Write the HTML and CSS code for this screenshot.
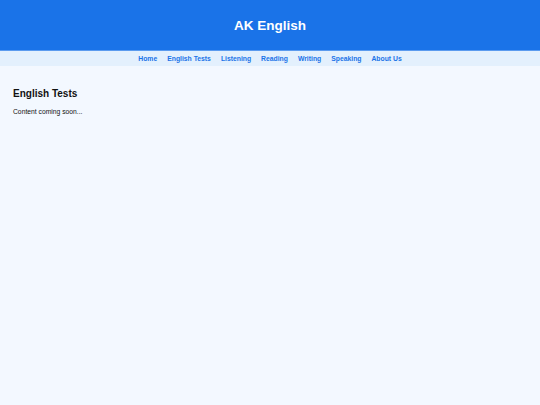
FILE: index.html
```html
<!DOCTYPE html>
<html lang="en">
<head>
    <meta charset="UTF-8">
    <meta name="viewport" content="width=device-width, initial-scale=1.0">
    <title>AK English - English Tests</title>
    <link rel="stylesheet" href="styles.css">
</head>
<body>
    <header class="header">
        <h1 class="logo">AK English</h1>
    </header>
    <nav class="nav">
        <a href="#">Home</a>
        <a href="#">English Tests</a>
        <a href="#">Listening</a>
        <a href="#">Reading</a>
        <a href="#">Writing</a>
        <a href="#">Speaking</a>
        <a href="#">About Us</a>
    </nav>
    <main class="content">
        <h2>English Tests</h2>
        <p>Content coming soon...</p>
    </main>
</body>
</html>
```

FILE: styles.css
```css
body {
    margin: 0;
    font-family: "Liberation Sans", Arial, sans-serif;
    font-size: 6.75px;
    background-color: #f3f8ff;
    color: #111;
}

.header {
    height: 50px;
    display: flex;
    align-items: center;
    justify-content: center;
    background-color: #1a73e8;
    border-bottom: 1px solid #5b9bef;
}

.logo {
    margin: 0;
    font-size: 13.5px;
    color: #fff;
}

.nav {
    display: flex;
    justify-content: center;
    gap: 10px;
    padding: 4px 0;
    background-color: #e3f0fd;
}

.nav a {
    color: #1a73e8;
    font-weight: bold;
    text-decoration: none;
    font-size: 6.8px;
}

.content {
    padding: 13px 13px;
}

.content h2 {
    margin: 9px 0 9px;
    font-size: 10px;
}

.content p {
    margin: 0;
}
```
